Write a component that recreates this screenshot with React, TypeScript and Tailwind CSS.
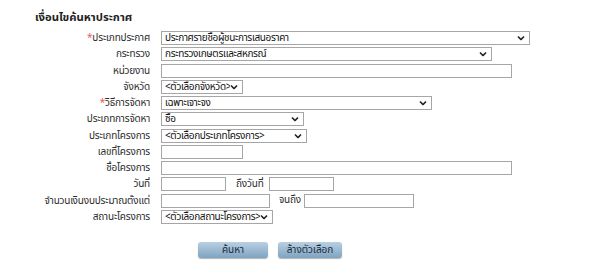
import { ReactNode } from "react";

function Chevron() {
    return (
        <svg
            className="pointer-events-none absolute right-[5px] top-1/2 -translate-y-1/2"
            width="8"
            height="5"
            viewBox="0 0 8 5"
        >
            <path d="M1 1 L4 4 L7 1" fill="none" stroke="#222" strokeWidth="1.6" />
        </svg>
    );
}

function Select({ width, value }: { width: string; value: string }) {
    return (
        <div className={`relative h-[14px] ${width}`}>
            <select
                defaultValue={value}
                className="block h-full w-full appearance-none border border-[#a6a6a6] bg-white py-0 pl-[3px] pr-[12px] text-[10px] leading-[12px] tracking-[-0.35px] text-[#111] outline-none"
            >
                <option>{value}</option>
            </select>
            <Chevron />
        </div>
    );
}

function Input({ width }: { width: string }) {
    return (
        <input
            type="text"
            className={`block h-[14px] border border-[#a6a6a6] bg-white px-1 py-0 text-[10px] outline-none ${width}`}
        />
    );
}

function Row({ label, required, children }: { label: string; required?: boolean; children: ReactNode }) {
    return (
        <div className="flex h-[14px] items-center">
            <label className="w-[150px] text-right text-[10px] leading-[14px] tracking-[-0.2px] text-[#2b2b2b]">
                {required && <span className="text-[#f05a5a]">*</span>}
                {label}
            </label>
            <div className="ml-[11px] flex items-center">{children}</div>
        </div>
    );
}

export default function App() {
    return (
        <div
            className="h-[265px] w-[600px] bg-white"
            style={{ fontFamily: "Tahoma, 'Noto Sans Thai', 'Noto Sans', sans-serif" }}
        >
            <h1 className="pl-[35px] pt-[11px] text-[11.3px] font-bold leading-[14px] text-[#222]">
                เงื่อนไขค้นหาประกาศ
            </h1>

            <div className="mt-[6px] flex flex-col gap-[2.27px]">
                <Row label="ประเภทประกาศ" required>
                    <Select width="w-[369px]" value="ประกาศรายชื่อผู้ชนะการเสนอราคา" />
                </Row>
                <Row label="กระทรวง">
                    <Select width="w-[331px]" value="กระทรวงเกษตรและสหกรณ์" />
                </Row>
                <Row label="หน่วยงาน">
                    <Input width="w-[351px]" />
                </Row>
                <Row label="จังหวัด">
                    <Select width="w-[82px]" value="<ตัวเลือกจังหวัด>" />
                </Row>
                <Row label="วิธีการจัดหา" required>
                    <Select width="w-[271px]" value="เฉพาะเจาะจง" />
                </Row>
                <Row label="ประเภทการจัดหา">
                    <Select width="w-[143px]" value="ซื้อ" />
                </Row>
                <Row label="ประเภทโครงการ">
                    <Select width="w-[146px]" value="<ตัวเลือกประเภทโครงการ>" />
                </Row>
                <Row label="เลขที่โครงการ">
                    <Input width="w-[82px]" />
                </Row>
                <Row label="ชื่อโครงการ">
                    <Input width="w-[351px]" />
                </Row>
                <Row label="วันที่">
                    <Input width="w-[65px]" />
                    <span className="ml-[10px] mr-[5px] text-[10px] tracking-[-0.2px] text-[#2b2b2b]">ถึงวันที่</span>
                    <Input width="w-[65px]" />
                </Row>
                <Row label="จำนวนเงินงบประมาณตั้งแต่">
                    <Input width="w-[109px]" />
                    <span className="ml-[9px] mr-[3px] text-[10px] tracking-[-0.2px] text-[#2b2b2b]">จนถึง</span>
                    <Input width="w-[110px]" />
                </Row>
                <Row label="สถานะโครงการ">
                    <Select width="w-[112px]" value="<ตัวเลือกสถานะโครงการ>" />
                </Row>
            </div>

            <div className="mt-[18px] flex gap-[10px] pl-[198px]">
                <button className="h-[16px] w-[70px] rounded-[3px] bg-gradient-to-b from-[#b9d0e2] to-[#7ea3c2] text-[10px] leading-[16px] text-[#1c2a38] shadow-[0_1px_1px_rgba(0,0,0,0.3)]">
                    ค้นหา
                </button>
                <button className="h-[16px] w-[64px] rounded-[3px] bg-gradient-to-b from-[#b9d0e2] to-[#7ea3c2] text-[10px] leading-[16px] text-[#1c2a38] shadow-[0_1px_1px_rgba(0,0,0,0.3)]">
                    ล้างตัวเลือก
                </button>
            </div>
        </div>
    );
}
